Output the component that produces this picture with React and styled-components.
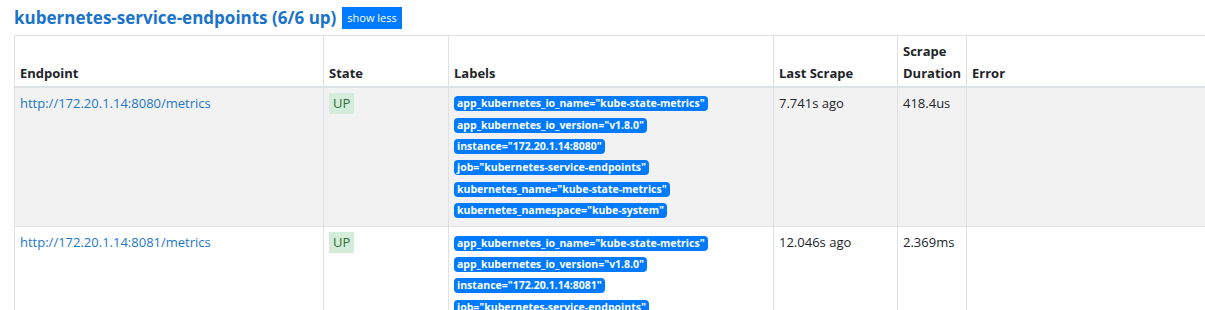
import styled, { createGlobalStyle } from "styled-components";

const GlobalStyle = createGlobalStyle`
  html, body {
    margin: 0;
    overflow: hidden;
    background: #fff;
  }
  body {
    font-family: "Open Sans", "Noto Sans", sans-serif;
    font-size: 13px;
    line-height: 21px;
    color: #212529;
  }
`;

const Page = styled.main`
  padding: 0 0 0 14px;
`;

const Title = styled.div`
  display: flex;
  align-items: center;
  gap: 6px;
  height: 35px;

  h2 {
    margin: 0;
    font-size: 17px;
    font-weight: 700;
    color: #1a73c9;
  }
`;

const ToggleButton = styled.button`
  background: #007bff;
  color: #fff;
  border: none;
  border-radius: 0;
  font-family: inherit;
  font-size: 11px;
  height: 22px;
  padding: 0 5px;
`;

const Table = styled.table`
  width: 1260px;
  table-layout: fixed;
  border-collapse: collapse;

  th,
  td {
    border: 1px solid #dee2e6;
    padding: 5px;
    vertical-align: top;
    text-align: left;
  }

  th {
    vertical-align: bottom;
    font-weight: 700;
    border-bottom-width: 2px;
    line-height: 22px;
    padding: 4px 5px 2px;
  }

  tbody tr:nth-child(odd) {
    background: #f2f2f2;
  }
`;

const Col = styled.col`
  width: ${(p) => (p.$w ? `${p.$w}px` : "auto")};
`;

const EndpointLink = styled.a`
  color: #1d78c9;
  text-decoration: none;
`;

const StateBadge = styled.span`
  display: inline-block;
  background: #d4edda;
  color: #2f6b3b;
  padding: 0 4px;
  line-height: 21px;
`;

const LabelRow = styled.div`
  display: flex;
  align-items: center;
  height: 21.4px;
`;

const Label = styled.span`
  display: inline-block;
  background: #007bff;
  color: #fff;
  font-size: 10.5px;
  font-weight: 700;
  line-height: 13px;
  padding: 1px 3px;
  border-radius: 4px;
  white-space: nowrap;
`;

const columns = [309, 125, 325, 124, 69, 0];

const targets = [
  {
    endpoint: "http://172.20.1.14:8080/metrics",
    instance: "172.20.1.14:8080",
    last: "7.741s ago",
    duration: "418.4us",
  },
  {
    endpoint: "http://172.20.1.14:8081/metrics",
    instance: "172.20.1.14:8081",
    last: "12.046s ago",
    duration: "2.369ms",
  },
];

const labelsFor = (t) => [
  'app_kubernetes_io_name="kube-state-metrics"',
  'app_kubernetes_io_version="v1.8.0"',
  `instance="${t.instance}"`,
  'job="kubernetes-service-endpoints"',
  'kubernetes_name="kube-state-metrics"',
  'kubernetes_namespace="kube-system"',
];

const App = () => {
  return (
    <Page>
      <GlobalStyle />
      <Title>
        <h2>kubernetes-service-endpoints (6/6 up)</h2>
        <ToggleButton>show less</ToggleButton>
      </Title>
      <Table>
        <colgroup>
          {columns.map((w, i) => (
            <Col key={i} $w={w} />
          ))}
        </colgroup>
        <thead>
          <tr>
            <th>Endpoint</th>
            <th>State</th>
            <th>Labels</th>
            <th>Last Scrape</th>
            <th>Scrape Duration</th>
            <th>Error</th>
          </tr>
        </thead>
        <tbody>
          {targets.map((t) => (
            <tr key={t.endpoint}>
              <td>
                <EndpointLink href="#">{t.endpoint}</EndpointLink>
              </td>
              <td>
                <StateBadge>UP</StateBadge>
              </td>
              <td>
                {labelsFor(t).map((l) => (
                  <LabelRow key={l}>
                    <Label>{l}</Label>
                  </LabelRow>
                ))}
              </td>
              <td>{t.last}</td>
              <td>{t.duration}</td>
              <td></td>
            </tr>
          ))}
        </tbody>
      </Table>
    </Page>
  );
};

export default App;
